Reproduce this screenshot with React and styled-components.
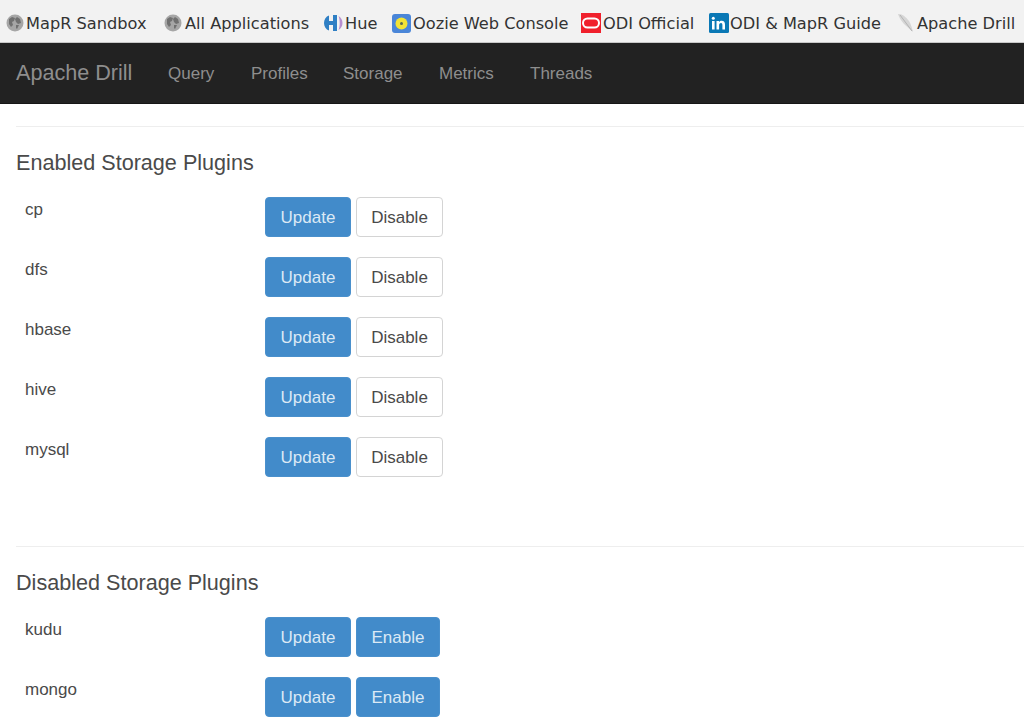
import React from "react";
import styled, { createGlobalStyle } from "styled-components";

const GlobalStyle = createGlobalStyle`
  html, body {
    margin: 0;
    padding: 0;
    height: 728px;
    overflow: hidden;
    background: #fff;
  }
  * { box-sizing: border-box; }
`;

const BookmarkBar = styled.div`
  height: 43px;
  background: #f2f2f2;
  border-bottom: 1px solid #c8c8c8;
  display: flex;
  align-items: center;
  padding: 4px 0 0 6px;
  font-family: "DejaVu Sans", sans-serif;
  font-size: 16.2px;
  color: #333;
  white-space: nowrap;
  overflow: hidden;
`;

const Bookmark = styled.div`
  display: flex;
  align-items: center;
  flex: none;
  width: ${(props) => props.width}px;
  gap: ${(props) => props.gap || 3}px;
`;

const Navbar = styled.nav`
  height: 61px;
  background: #222;
  border-bottom: 1px solid #161616;
  display: flex;
  align-items: center;
  padding-left: 16px;
  font-family: "Liberation Sans", sans-serif;
  color: #8e8e8e;
`;

const Brand = styled.div`
  font-size: 21.6px;
  width: 152px;
  flex: none;
`;

const NavLink = styled.div`
  font-size: 17px;
  flex: none;
  padding-top: 2px;
  width: ${(props) => props.width}px;
`;

const Main = styled.main`
  padding: 22px 0 0 16px;
  font-family: "Liberation Sans", sans-serif;
  color: #444;
`;

const Rule = styled.hr`
  border: 0;
  border-top: 1px solid #eee;
  margin: 0;
`;

const Heading = styled.h4`
  font-size: 21.6px;
  font-weight: 400;
  line-height: 24px;
  margin: 24px 0 22px;
  color: #4a4a4a;
`;

const Section = styled.section`
  margin-bottom: ${(props) => props.bottom || 0}px;
`;

const Row = styled.div`
  display: flex;
  height: 60px;
  padding-left: 9px;
`;

const Name = styled.div`
  width: 240px;
  flex: none;
  font-size: 17px;
  line-height: 23px;
  padding-top: 1px;
  color: #4a4a4a;
`;

const Button = styled.div`
  height: 40px;
  padding-top: 2px;
  display: flex;
  align-items: center;
  justify-content: center;
  width: ${(props) => props.width}px;
  margin-right: ${(props) => (props.first ? 5 : 0)}px;
  flex: none;
  font-size: 17px;
  border-radius: 4px;
  border: 1px solid ${(props) => (props.primary ? "#4a90cc" : "#d4d4d4")};
  background: ${(props) => (props.primary ? "#428bca" : "#fff")};
  color: ${(props) => (props.primary ? "#dbe9f5" : "#4a4a4a")};
`;

const Globe = () => (
  <svg width="18" height="18" viewBox="0 0 18 18">
    <circle cx="9" cy="9" r="8.500" fill="#a6a6a6" />
    <path d="M3 5l3-2 3 1-1 3-2 1 1 3-2 2-2-3zM11 3l3 2 1 4-3 1-2-2-1-3zM10 11l3 0-2 4-1-1z" fill="#707070" />
  </svg>
);

const HueIcon = () => (
  <svg width="20" height="18" viewBox="0 0 20 18">
    <path d="M6 1.500C3 2.500 1 5.500 1 9s2 6.500 5 7.500V11h4v6h4V1h-4v6H6z" fill="#2f7fc4" />
    <path d="M15.500 2c2.500 1.500 4 4 4 7s-1.500 5.500-4 7c.8-2 1.200-4.500 1.200-7s-.4-5-1.200-7z" fill="#b78fd0" />
  </svg>
);

const OozieIcon = () => (
  <svg width="19" height="19" viewBox="0 0 19 19">
    <rect width="19" height="19" rx="3" fill="#4a86d8" />
    <circle cx="9.500" cy="9.500" r="6" fill="#f2e335" />
    <circle cx="9.500" cy="9.500" r="1.500" fill="#5a6a50" />
  </svg>
);

const OracleIcon = () => (
  <svg width="20" height="20" viewBox="0 0 20 20">
    <rect width="20" height="20" fill="#f0202c" />
    <rect x="2" y="5.500" width="16" height="9" rx="4.500" fill="none" stroke="#fff" strokeWidth="2" />
  </svg>
);

const LinkedInIcon = () => (
  <svg width="20" height="20" viewBox="0 0 20 20">
    <rect width="20" height="20" rx="1.500" fill="#0a78b5" />
    <rect x="3" y="8" width="2.600" height="8.500" fill="#fff" />
    <circle cx="4.300" cy="5.200" r="1.500" fill="#fff" />
    <path d="M7.500 8h2.500v1.200c.6-.9 1.500-1.400 2.700-1.400 2.300 0 3.300 1.400 3.300 3.900v4.800h-2.600v-4.400c0-1.200-.4-2-1.400-2s-1.900.8-1.900 2.100v4.300H7.500z" fill="#fff" />
  </svg>
);

const FeatherIcon = () => (
  <svg width="17" height="20" viewBox="0 0 17 20">
    <path d="M1 1c4-.5 8 3 11 7 2 3 3 7 4 11-3-3-6-5-9-8C4 8 2 4 1 1z" fill="#d6d6d6" />
    <path d="M3 2l12 16" stroke="#b4b4b4" strokeWidth="1" />
  </svg>
);

const bookmarks = [
  { label: "MapR Sandbox", icon: <Globe />, gap: 2, width: 158 },
  { label: "All Applications", icon: <Globe />, width: 159 },
  { label: "Hue", icon: <HueIcon />, gap: 2, width: 69 },
  { label: "Oozie Web Console", icon: <OozieIcon />, gap: 2, width: 189 },
  { label: "ODI Official", icon: <OracleIcon />, gap: 2, width: 128 },
  { label: "ODI & MapR Guide", icon: <LinkedInIcon />, gap: 1, width: 188 },
  { label: "Apache Drill", icon: <FeatherIcon />, gap: 3, width: 130 },
];

const links = [
  { label: "Query", width: 83 },
  { label: "Profiles", width: 92 },
  { label: "Storage", width: 96 },
  { label: "Metrics", width: 91 },
  { label: "Threads", width: 80 },
];

const PluginRow = ({ name, enabled }) => (
  <Row>
    <Name>{name}</Name>
    <Button primary first width={86}>Update</Button>
    {enabled ? (
      <Button width={87}>Disable</Button>
    ) : (
      <Button primary width={84}>Enable</Button>
    )}
  </Row>
);

const App = () => {
  return (
    <>
      <GlobalStyle />
      <BookmarkBar>
        {bookmarks.map((item) => (
          <Bookmark key={item.label} width={item.width} gap={item.gap}>
            {item.icon}
            <span>{item.label}</span>
          </Bookmark>
        ))}
      </BookmarkBar>
      <Navbar>
        <Brand>Apache Drill</Brand>
        {links.map((item) => (
          <NavLink key={item.label} width={item.width}>{item.label}</NavLink>
        ))}
      </Navbar>
      <Main>
        <Section bottom={49}>
          <Rule />
          <Heading>Enabled Storage Plugins</Heading>
          {["cp", "dfs", "hbase", "hive", "mysql"].map((name) => (
            <PluginRow key={name} name={name} enabled />
          ))}
        </Section>
        <Section>
          <Rule />
          <Heading>Disabled Storage Plugins</Heading>
          {["kudu", "mongo"].map((name) => (
            <PluginRow key={name} name={name} />
          ))}
        </Section>
      </Main>
    </>
  );
};

export default App;
